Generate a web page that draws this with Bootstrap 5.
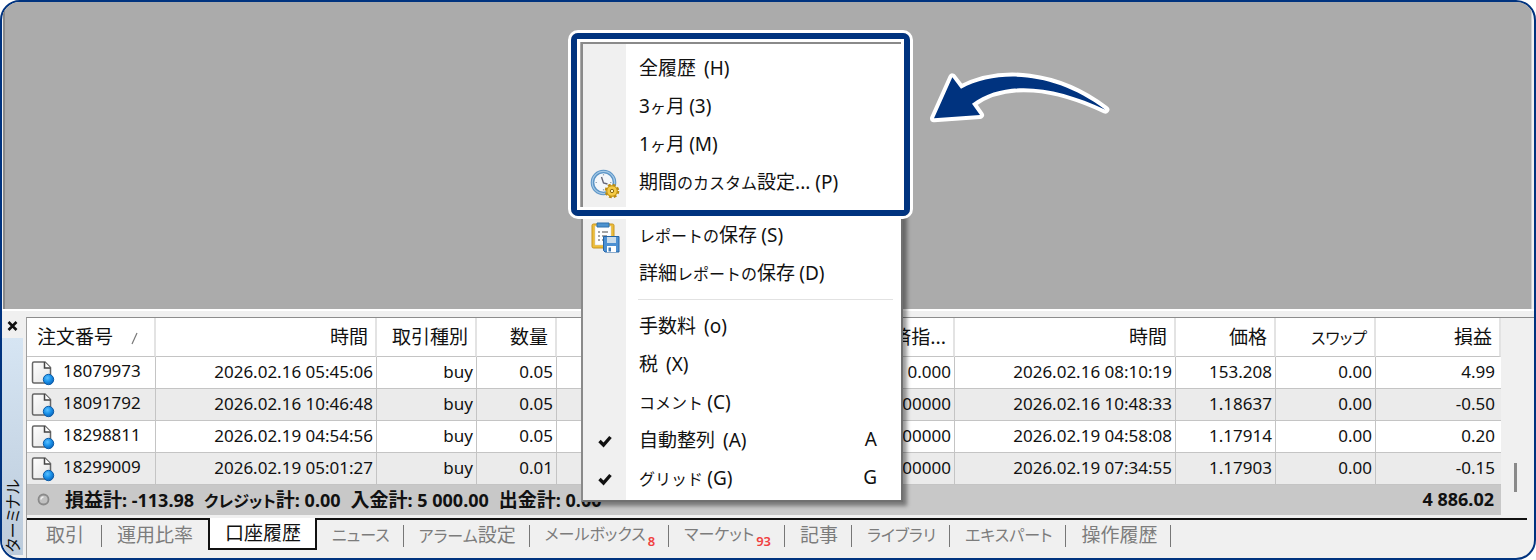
<!DOCTYPE html>
<html lang="ja">
<head>
<meta charset="utf-8">
<meta name="viewport" content="width=device-width, initial-scale=1">
<title>ターミナル</title>
<link href="https://cdn.jsdelivr.net/npm/bootstrap@5.3.0/dist/css/bootstrap.min.css" rel="stylesheet">
<style>
  :root { --navy: #00337f; --face: #f0f0f0; }
  body { font-family: "Noto Sans", "Noto Sans CJK JP", sans-serif; font-size: 17px; line-height: 24px; color: #111; background: #fff; }
  .kanji { font-family: "Noto Sans CJK JP", sans-serif; font-size: 19px; font-feature-settings: "palt"; }
  .kana { font-size: 16px; }
  .app-frame { min-height: 100vh; border: 2px solid var(--navy); border-radius: 20px; background: var(--face); }
  .workspace { background: #ababab; border-left: 2px solid #8a8a8a; margin: 0 2px 0 1px; border-right: 1px solid #d0d0d0; }
  .terminal { border-top: 2px solid #fff; padding-top: 6px; }
  .side-strip { width: 24px; }
  .close-btn { width: 20px; height: 21px; padding-bottom: 4px; }
  .side-title { background: linear-gradient(#d6e5f3, #bccbdb); width: 21px; margin-bottom: 3px; padding-bottom: 3px; }
  .side-title span { writing-mode: vertical-rl; text-orientation: sideways; transform: rotate(180deg); line-height: 21px; font-size: 16px; }
  .grid-panel { border-left: 1px solid #a0a0a0; border-top: 1px solid #8c8c8c; min-width: 0; }
  .orders { table-layout: fixed; width: 100%; border-collapse: separate; border-spacing: 0; background: #fff; }
  .orders th { height: 39px; font-weight: 400; padding: 0 7px 2px; text-align: right; border-right: 2px solid #e3e3e3; border-bottom: 1px solid #c4c4c4; overflow: hidden; white-space: nowrap; }
  .orders th:first-child { text-align: left; padding-left: 10px; }
  .orders td { height: 32px; padding: 0 3px 2px; text-align: right; border-right: 1px solid #c4c4c4; border-bottom: 1px solid #c4c4c4; white-space: nowrap; }
  .orders td:first-child { text-align: left; padding: 0 0 0 4px; }
  .orders td:last-child { border-right: 0; padding-right: 6px; }
  .orders tbody tr:nth-child(even) { background: #ebebeb; }
  .totals { background: #c8c8c8; height: 30px; font-size: 18px; font-weight: 700; padding: 0 7px 2px 9px; }
  .totals .kanji { font-weight: 700; }
  .totals .sums { gap: 10px; margin-left: 6px; }
  .scroll-track { width: 33px; padding-top: 145px; }
  .scroll-thumb { width: 3px; height: 29px; background: #8a8a8a; margin-left: 13px; }
  .tab-bar { border-top: 2px solid #111; margin-top: 3px; margin-right: 7px; height: 40px; }
  .tab-bar button { position: relative; border: 0; background: none; color: #7c7c7c; height: 28px; padding: 0 14px 0 15px; line-height: 26px; white-space: nowrap; }
  .tab-bar button::after { content: ""; position: absolute; right: 0; top: 5px; height: 22px; width: 1px; background: #777; }
  .tab-bar button:first-child { padding-left: 19px; padding-right: 18px; }
  .tab-bar .before-active { padding-right: 15px; }
  .tab-bar .before-active::after, .tab-bar .current::after { display: none; }
  .tab-bar .current { background: #fff; color: #111; border: 2px solid #111; border-top: 0; height: 32px; margin-top: -2px; padding-bottom: 2px; }
  .tab-bar small { font-family: "Noto Sans", sans-serif; font-size: 13px; font-weight: 600; color: #f04040; position: relative; top: 6px; margin-left: 2px; }
  .context-menu { position: absolute; left: 579px; top: 40px; width: 322px; border: 2px solid #8a8a8a; border-right-color: #707070; border-bottom-color: #707070; padding: 5px 0 3px; background: linear-gradient(to right, var(--face) 43px, #fff 43px); box-shadow: 4px 4px 4px rgba(0,0,0,.4); z-index: 2; }
  .context-menu button { height: 38px; width: 100%; border: 0; background: none; padding: 0 24px 2px 0; color: #111; }
  .context-menu .slot { width: 44px; padding-top: 5px; }
  .context-menu .label { margin-left: 12px; }
  .context-menu .latin { font-family: "Noto Sans", sans-serif; font-size: 19px; }
  .menu-rule { height: 15px; padding: 7px 8px 0 55px; }
  .menu-rule hr { margin: 0; border-color: #e2e2e2; opacity: 1; }
  .callout-frame { position: absolute; left: 566px; top: 28px; width: 345px; height: 189px; border: 3px solid #fff; border-radius: 10px; z-index: 3; pointer-events: none; }
  .callout-frame div { border: 6px solid var(--navy); border-radius: 7px; height: 100%; }
  .callout-frame div div { border: 3px solid #fff; border-radius: 0; }
  .callout-arrow { position: absolute; left: 926px; top: 68px; z-index: 3; }
</style>
</head>
<body>
<svg width="0" height="0" class="position-absolute" aria-hidden="true">
  <defs>
    <linearGradient id="paper" x1="0" y1="0" x2="1" y2="1"><stop offset="0" stop-color="#fff"/><stop offset="1" stop-color="#e2e2e2"/></linearGradient>
    <radialGradient id="ball" cx=".4" cy=".35" r=".7"><stop offset="0" stop-color="#5cc0ff"/><stop offset=".5" stop-color="#1b93ea"/><stop offset="1" stop-color="#0a5fb5"/></radialGradient>
    <symbol id="order-doc" viewBox="0 0 24 26">
      <path d="M3 2H14L19.500 7.500V23H3Q1.500 23 1.500 21.500V3.500Q1.500 2 3 2Z" fill="url(#paper)" stroke="#666" stroke-width="1.500"/>
      <path d="M13.500 2V8H19.500" fill="#fff" stroke="#444" stroke-width="1.500"/>
      <circle cx="17.500" cy="19.500" r="5.200" fill="url(#ball)" stroke="#0c5ca8"/>
    </symbol>
  </defs>
</svg>
<main class="app-frame position-relative overflow-hidden d-flex flex-column">
  <div class="workspace flex-grow-1"></div>

  <section class="terminal d-flex">
    <div class="side-strip d-flex flex-column flex-shrink-0">
      <button class="close-btn btn px-0 pt-0 border-0 d-flex align-items-center justify-content-center" aria-label="閉じる"><svg width="11" height="10" viewBox="0 0 11 10"><path d="M1.500 1L9.500 9M9.500 1L1.500 9" stroke="#111" stroke-width="2.600"/></svg></button>
      <div class="side-title flex-grow-1 d-flex justify-content-center align-items-end"><span class="kanji kana">ターミナル</span></div>
    </div>
    <div class="grid-panel flex-grow-1">
      <div class="d-flex">
        <div class="flex-grow-1 overflow-hidden">
          <table class="orders">
            <colgroup><col style="width:129px"><col style="width:221px"><col style="width:100px"><col style="width:80px"><col><col style="width:100px"><col style="width:221px"><col style="width:100px"><col style="width:100px"><col style="width:125px"></colgroup>
            <thead><tr class="kanji">
              <th>注文番号<svg class="ms-3" width="10" height="13" viewBox="0 0 10 13"><path d="M3 12L8 1" stroke="#777" stroke-width="1.200"/></svg></th>
              <th>時間</th><th>取引種別</th><th>数量</th><th></th><th>決済指...</th><th>時間</th><th>価格</th><th><span class="kana">スワップ</span></th><th>損益</th>
            </tr></thead>
            <tbody>
              <tr><td><svg class="me-2" width="24" height="26"><use href="#order-doc"/></svg>18079973</td><td>2026.02.16 05:45:06</td><td>buy</td><td>0.05</td><td></td><td>0.000</td><td>2026.02.16 08:10:19</td><td>153.208</td><td>0.00</td><td>4.99</td></tr>
              <tr><td><svg class="me-2" width="24" height="26"><use href="#order-doc"/></svg>18091792</td><td>2026.02.16 10:46:48</td><td>buy</td><td>0.05</td><td></td><td>0.00000</td><td>2026.02.16 10:48:33</td><td>1.18637</td><td>0.00</td><td>-0.50</td></tr>
              <tr><td><svg class="me-2" width="24" height="26"><use href="#order-doc"/></svg>18298811</td><td>2026.02.19 04:54:56</td><td>buy</td><td>0.05</td><td></td><td>0.00000</td><td>2026.02.19 04:58:08</td><td>1.17914</td><td>0.00</td><td>0.20</td></tr>
              <tr><td><svg class="me-2" width="24" height="26"><use href="#order-doc"/></svg>18299009</td><td>2026.02.19 05:01:27</td><td>buy</td><td>0.01</td><td></td><td>0.00000</td><td>2026.02.19 07:34:55</td><td>1.17903</td><td>0.00</td><td>-0.15</td></tr>
            </tbody>
          </table>
          <div class="totals d-flex align-items-center text-nowrap">
            <svg class="me-2 flex-shrink-0" width="15" height="15" viewBox="0 0 15 15"><circle cx="7.500" cy="7.500" r="5" fill="#c0c0c0" stroke="#8a8a8a" stroke-width="1.800"/><path d="M5 7.500A2.500 2.500 0 0 1 7.500 5" fill="none" stroke="#eee" stroke-width="1.500"/></svg>
            <div class="sums d-flex"><span><span class="kanji">損益計</span>: -113.98</span><span><span class="kanji"><span class="kana">クレジット</span>計</span>: 0.00</span><span><span class="kanji">入金計</span>: 5 000.00</span><span><span class="kanji">出金計</span>: 0.00</span></div>
            <span class="ms-auto">4 886.02</span>
          </div>
        </div>
        <div class="scroll-track flex-shrink-0"><div class="scroll-thumb"></div></div>
      </div>
      <nav class="tab-bar d-flex align-items-start" aria-label="ターミナル">
        <button class="kanji">取引</button>
        <button class="kanji before-active">運用比率</button>
        <button class="kanji current">口座履歴</button>
        <button class="kanji kana">ニュース</button>
        <button class="kanji"><span class="kana">アラーム</span>設定</button>
        <button class="kanji kana">メールボックス<small>8</small></button>
        <button class="kanji kana">マーケット<small>93</small></button>
        <button class="kanji">記事</button>
        <button class="kanji kana">ライブラリ</button>
        <button class="kanji kana">エキスパート</button>
        <button class="kanji">操作履歴</button>
      </nav>
    </div>
  </section>

  <div class="context-menu kanji" role="menu">
    <button role="menuitem" class="d-flex align-items-center"><span class="slot"></span><span class="label">全履歴<span class="latin ms-2">(H)</span></span></button>
    <button role="menuitem" class="d-flex align-items-center"><span class="slot"></span><span class="label"><span class="latin">3</span><span class="kana">ヶ</span>月 <span class="latin">(3)</span></span></button>
    <button role="menuitem" class="d-flex align-items-center"><span class="slot"></span><span class="label"><span class="latin">1</span><span class="kana">ヶ</span>月 <span class="latin">(M)</span></span></button>
    <button role="menuitem" class="d-flex align-items-center"><span class="slot d-flex justify-content-center">
      <svg width="30" height="30" viewBox="0 0 30 30"><circle cx="13.500" cy="13.500" r="11" fill="#f4f7fa" stroke="#5b94c6" stroke-width="3.600"/><circle cx="13.500" cy="13.500" r="11.200" fill="none" stroke="#a5c9e6" stroke-width="1.200"/><path d="M11.500 8L13.500 14L17.500 15" fill="none" stroke="#667" stroke-width="1.400"/><path d="M13.500 5v1.500M13.500 20v1.500M5.500 13.500H7M20 13.500h1.500" stroke="#9ab" stroke-width="1.200"/><circle cx="22" cy="22" r="6" fill="#f4c437" stroke="#b98a12" stroke-width="2.600" stroke-dasharray="2.700 2.010"/><circle cx="22" cy="22" r="5.200" fill="#f6cb45" stroke="#c4951b" stroke-width="1"/><circle cx="22" cy="22" r="1.700" fill="#fff3c0" stroke="#8c6a10"/></svg></span><span class="label">期間<span class="kana">のカスタム</span>設定<span class="latin">... (P)</span></span></button>
    <div class="menu-rule"><hr></div>
    <button role="menuitem" class="d-flex align-items-center"><span class="slot d-flex justify-content-center">
      <svg width="30" height="32" viewBox="0 0 30 32"><rect x="2" y="3" width="22" height="24" rx="1.500" fill="#edbd3a" stroke="#c79521"/><path d="M5 5H21V24H5Z" fill="#fff" stroke="#ccc" stroke-width=".5"/><path d="M7 2H19V6H7Z" fill="#4e93cf" stroke="#2f70ac"/><path d="M8 11h2M12 11h6M8 15h2M12 15h5M8 19h2M12 19h3" stroke="#888" stroke-width="1.300"/><path d="M13.500 15.500H29V31H15L13.500 29.500Z" fill="#4c90d2" stroke="#2565a6"/><path d="M17 16H26V22H17Z" fill="#c9dcec"/><path d="M17 25H26V31H17Z" fill="#fff"/><path d="M18.500 26.500h2.500v4h-2.500z" fill="#3d78b4"/></svg></span><span class="label"><span class="kana">レポートの</span>保存 <span class="latin">(S)</span></span></button>
    <button role="menuitem" class="d-flex align-items-center"><span class="slot"></span><span class="label">詳細<span class="kana">レポートの</span>保存 <span class="latin">(D)</span></span></button>
    <div class="menu-rule"><hr></div>
    <button role="menuitem" class="d-flex align-items-center"><span class="slot"></span><span class="label">手数料<span class="latin ms-2">(o)</span></span></button>
    <button role="menuitem" class="d-flex align-items-center"><span class="slot"></span><span class="label">税<span class="latin ms-2">(X)</span></span></button>
    <button role="menuitem" class="d-flex align-items-center"><span class="slot"></span><span class="label"><span class="kana">コメント</span> <span class="latin">(C)</span></span></button>
    <button role="menuitem" class="d-flex align-items-center"><span class="slot d-flex justify-content-center"><svg width="14" height="13" viewBox="0 0 14 13"><path d="M1.500 6L5.500 10L12.500 2" fill="none" stroke="#111" stroke-width="3.400"/></svg></span><span class="label">自動整列<span class="latin ms-2">(A)</span></span><span class="latin ms-auto">A</span></button>
    <button role="menuitem" class="d-flex align-items-center"><span class="slot d-flex justify-content-center"><svg width="14" height="13" viewBox="0 0 14 13"><path d="M1.500 6L5.500 10L12.500 2" fill="none" stroke="#111" stroke-width="3.400"/></svg></span><span class="label"><span class="kana">グリッド</span> <span class="latin">(G)</span></span><span class="latin ms-auto">G</span></button>
  </div>

  <div class="callout-frame"><div><div></div></div></div>
  <svg class="callout-arrow" width="184" height="56" viewBox="84 90 552 168"><path d="M102 235L157 112L183 146C300 85 470 98 616 209C470 140 320 115 216 191L240 225Z" fill="#00337f" stroke="#fff" stroke-width="24" stroke-linejoin="round" paint-order="stroke"/></svg>
</main>
<script src="https://cdn.jsdelivr.net/npm/bootstrap@5.3.0/dist/js/bootstrap.bundle.min.js"></script>
</body>
</html>
